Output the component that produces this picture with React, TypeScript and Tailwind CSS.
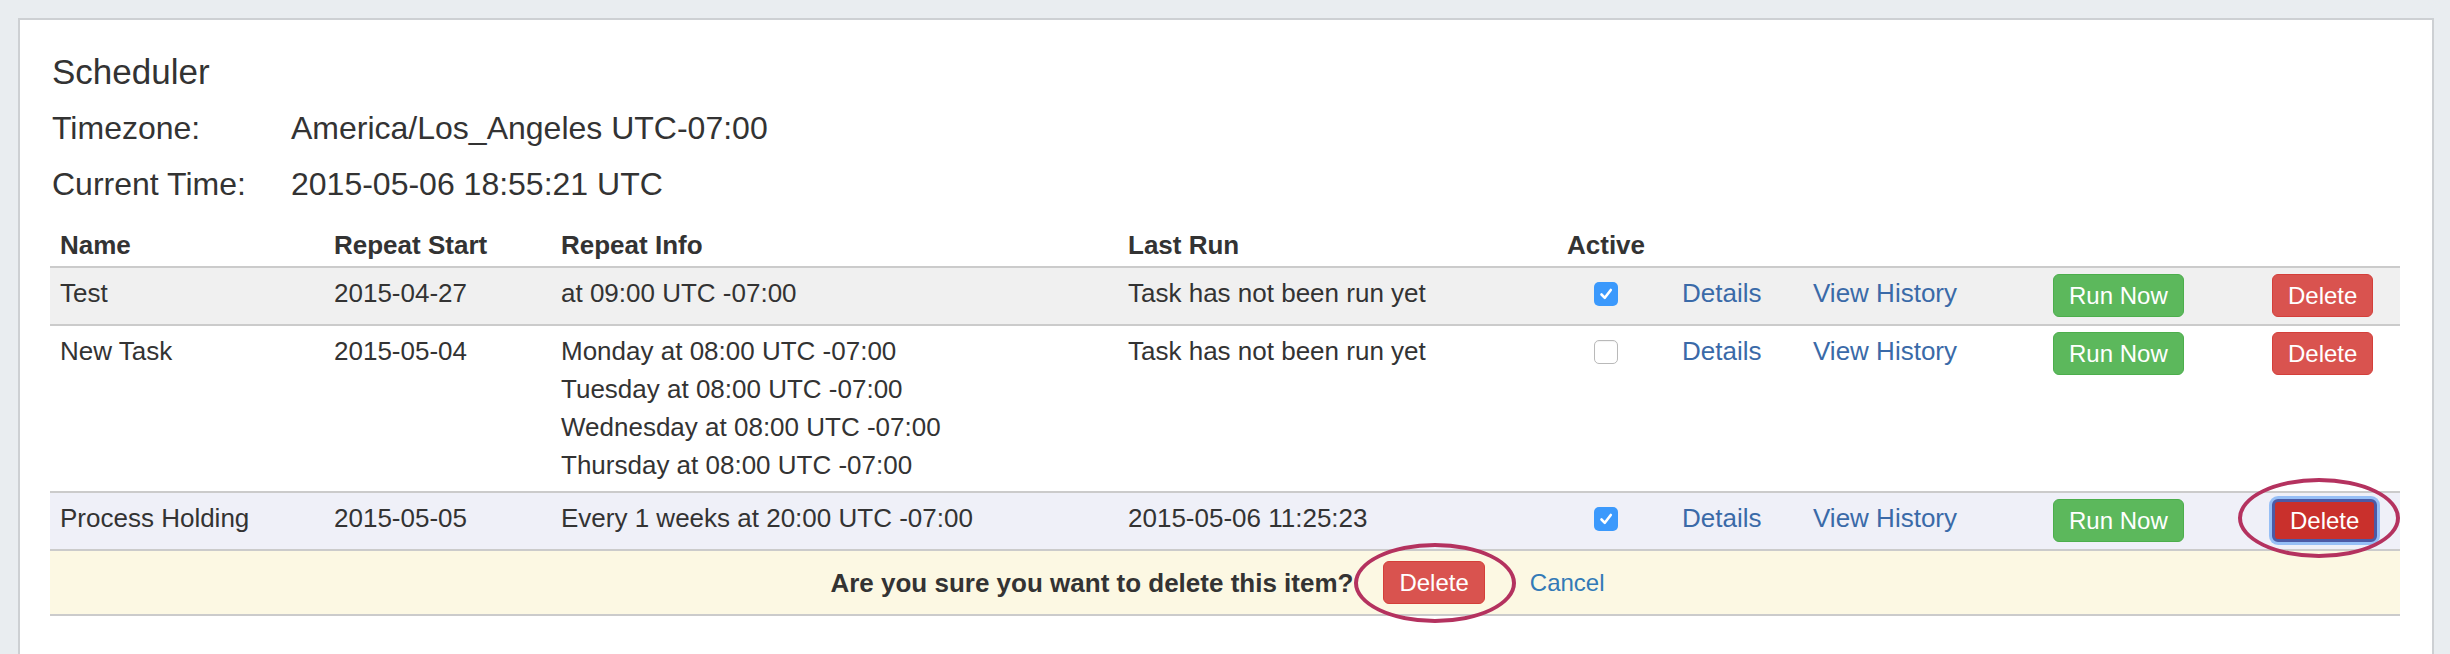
import React from "react";

type Task = {
  name: string;
  start: string;
  repeat: string[];
  lastRun: string;
  active: boolean;
  bg: string;
  focused?: boolean;
};

const tasks: Task[] = [
  {
    name: "Test",
    start: "2015-04-27",
    repeat: ["at 09:00 UTC -07:00"],
    lastRun: "Task has not been run yet",
    active: true,
    bg: "bg-[#f0f0f0]",
  },
  {
    name: "New Task",
    start: "2015-05-04",
    repeat: [
      "Monday at 08:00 UTC -07:00",
      "Tuesday at 08:00 UTC -07:00",
      "Wednesday at 08:00 UTC -07:00",
      "Thursday at 08:00 UTC -07:00",
    ],
    lastRun: "Task has not been run yet",
    active: false,
    bg: "bg-white",
  },
  {
    name: "Process Holding",
    start: "2015-05-05",
    repeat: ["Every 1 weeks at 20:00 UTC -07:00"],
    lastRun: "2015-05-06 11:25:23",
    active: true,
    bg: "bg-[#eff0f8]",
    focused: true,
  },
];

// shared column template so header and rows line up
const cols =
  "grid grid-cols-[274px_227px_567px_439px_115px_131px_240px_219px_138px] items-start";

function Checkbox({ checked }: { checked: boolean }) {
  if (checked) {
    return (
      <span className="flex h-[24px] w-[24px] items-center justify-center rounded-[5px] bg-[#3b99fc]">
        <svg width="16" height="16" viewBox="0 0 16 16" fill="none">
          <path d="M3.5 8.5 L6.8 11.8 L12.8 4" stroke="white" strokeWidth="2.6" strokeLinecap="round" strokeLinejoin="round" />
        </svg>
      </span>
    );
  }
  return (
    <span className="block h-[24px] w-[24px] rounded-[5px] border-[1.5px] border-[#b9b9b9] bg-white shadow-[inset_0_1px_1px_rgba(0,0,0,0.05)]" />
  );
}

function Ring({ className }: { className: string }) {
  return (
    <span
      className={`pointer-events-none absolute h-[80px] w-[162px] rounded-[50%] border-[4px] border-[#b4325f] ${className}`}
    />
  );
}

function Btn({ color, focused, children }: { color: "green" | "red"; focused?: boolean; children: React.ReactNode }) {
  const base = "flex h-[43px] items-center rounded-[6px] border-[1.5px] px-[15px] text-[24px] leading-none text-white";
  if (color === "green") {
    return <span className={`${base} border-[#4cae4c] bg-[#5cb85c]`}>{children}</span>;
  }
  if (focused) {
    return (
      <span className={`${base} border-[3px] border-[#4b5aa6] bg-[#c9302c] px-[13.5px] shadow-[0_0_0_3px_rgba(120,175,245,0.75)]`}>
        {children}
      </span>
    );
  }
  return <span className={`${base} border-[#d43f3a] bg-[#d9534f]`}>{children}</span>;
}

function TaskRow({ task }: { task: Task }) {
  return (
    <div className={`${cols} ${task.bg} border-b-2 border-[#cbcbcb] pb-[7px] pt-[6px] text-[26px] leading-[38px] text-[#333]`}>
      <div className="pl-[10px]">{task.name}</div>
      <div className="pl-[10px]">{task.start}</div>
      <div className="pl-[10px]">
        {task.repeat.map((r) => (
          <div key={r}>{r}</div>
        ))}
      </div>
      <div className="pl-[10px]">{task.lastRun}</div>
      <div className="pl-[37px] pt-[8px]">
        <Checkbox checked={task.active} />
      </div>
      <div className="pl-[10px] text-[#3a6aa8]">Details</div>
      <div className="pl-[10px] text-[#3a6aa8]">View History</div>
      <div className="flex pl-[10px]">
        <Btn color="green">Run Now</Btn>
      </div>
      <div className="flex pl-[10px]">
        <div className="relative">
          <Btn color="red" focused={task.focused}>
            Delete
          </Btn>
          {task.focused && <Ring className="left-[-34px] top-[-21px]" />}
        </div>
      </div>
    </div>
  );
}

export default function App() {
  return (
    <div className="h-[654px] overflow-hidden bg-[#e9edf0] pl-[18px] pr-[16px] pt-[18px] font-['Liberation_Sans',Arial,sans-serif]">
      <div className="h-full border-2 border-b-0 border-[#cdd0d3] bg-white pl-[30px] pr-[32px] pt-[32px]">
        <h3 className="pl-[2px] text-[35px] leading-[40px] text-[#333]">Scheduler</h3>
        <div className="mt-[16px] flex flex-col gap-[16px] pl-[2px] text-[32px] leading-[40px] text-[#333]">
          <div className="flex">
            <span className="w-[239px]">Timezone:</span>
            <span>America/Los_Angeles UTC-07:00</span>
          </div>
          <div className="flex">
            <span className="w-[239px]">Current Time:</span>
            <span>2015-05-06 18:55:21 UTC</span>
          </div>
        </div>

        <div className="mt-[16px]">
          <div className={`${cols} border-b-2 border-[#cbcbcb] pb-[2px] pt-[6px] text-[26px] font-bold leading-[38px] text-[#333]`}>
            <div className="pl-[10px]">Name</div>
            <div className="pl-[10px]">Repeat Start</div>
            <div className="pl-[10px]">Repeat Info</div>
            <div className="pl-[10px]">Last Run</div>
            <div className="pl-[10px]">Active</div>
            <div />
            <div />
            <div />
            <div />
          </div>

          {tasks.map((t) => (
            <TaskRow key={t.name} task={t} />
          ))}

          <div className="flex h-[65px] items-center justify-center border-b-2 border-[#cbcbcb] bg-[#fcf8e3] text-[#333]">
            <span className="text-[26px] font-bold leading-[38px]">Are you sure you want to delete this item?</span>
            <div className="relative ml-[30px]">
              <Btn color="red">Delete</Btn>
              <Ring className="left-[-29px] top-[-18px]" />
            </div>
            <span className="ml-[30px] px-[15px] text-[24px] leading-[38px] text-[#337ab7]">Cancel</span>
          </div>
        </div>
      </div>
    </div>
  );
}
